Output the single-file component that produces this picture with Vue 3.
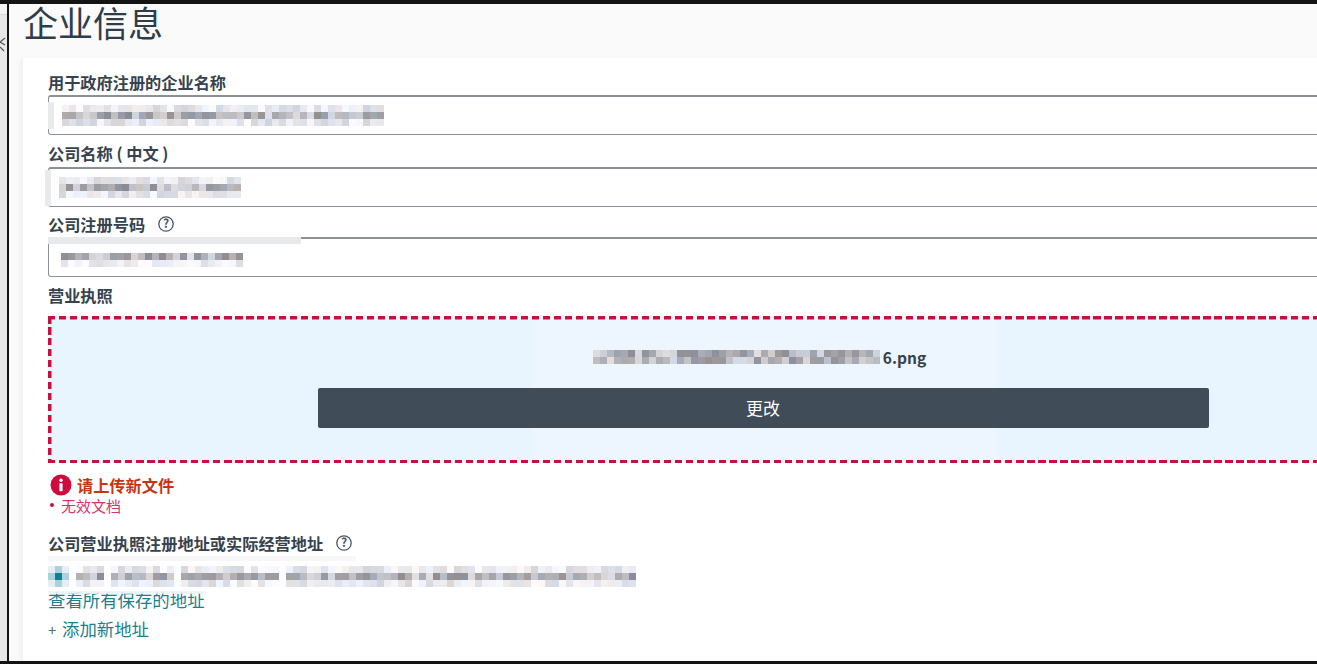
<script setup>
// redacted values in the reference are pixel mosaics, so build them from a small seeded generator
function mosaic(seed, cols, rows, darkRow, gaps = []) {
  let s = seed
  const rnd = () => {
    s = (s * 16807) % 2147483647
    return (s % 1000) / 1000
  }
  const out = []
  for (let r = 0; r < rows; r++) {
    for (let c = 0; c < cols; c++) {
      const strong = r === darkRow || darkRow === -1
      let v = strong ? 140 + rnd() * 85 : 212 + rnd() * 40
      if (gaps.includes(c)) v = 254
      const tint = rnd() * 14 - 7
      out.push(`rgb(${Math.round(v + tint)},${Math.round(v)},${Math.round(v - tint + 6)})`)
    }
  }
  return { cols, cells: out }
}

function gridStyle(m) {
  return { gridTemplateColumns: `repeat(${m.cols}, 7px)` }
}

const legalName = mosaic(17, 46, 3, 1)
const chineseName = mosaic(91, 26, 3, 1)
const regNumber = mosaic(233, 26, 2, 0)
const fileName = mosaic(47, 41, 2, -1)
const address = mosaic(311, 80, 3, 1, [4, 14, 29])
</script>

<template>
  <div class="page">
    <div class="rail">
      <svg class="rail-mark" width="7" height="16" viewBox="0 0 7 16">
        <path d="M6 1 L1 5 L6 8 M1 10 L5 14" fill="none" stroke="#555" stroke-width="1.2" />
      </svg>
    </div>

    <div class="main">
      <h1 class="title">企业信息</h1>

      <div class="card">
        <label class="label">用于政府注册的企业名称</label>
        <div class="input">
          <span class="side-strip"></span>
          <div class="mosaic" :style="gridStyle(legalName)">
            <i v-for="(c, i) in legalName.cells" :key="i" :style="{ background: c }"></i>
          </div>
        </div>

        <label class="label">公司名称 ( 中文 )</label>
        <div class="input second">
          <span class="side-strip wide"></span>
          <div class="mosaic short" :style="gridStyle(chineseName)">
            <i v-for="(c, i) in chineseName.cells" :key="i" :style="{ background: c }"></i>
          </div>
        </div>

        <label class="label">
          公司注册号码
          <svg class="help" width="18" height="18" viewBox="0 0 18 18">
            <circle cx="9" cy="9" r="7.2" fill="none" stroke="#4a5560" stroke-width="1.3" />
            <text x="9" y="13" text-anchor="middle" font-size="12" fill="#4a5560">?</text>
          </svg>
        </label>
        <div class="input">
          <span class="strip"></span>
          <div class="mosaic low" :style="gridStyle(regNumber)">
            <i v-for="(c, i) in regNumber.cells" :key="i" :style="{ background: c }"></i>
          </div>
        </div>

        <label class="label">营业执照</label>
        <div class="dropzone">
          <div class="file">
            <div class="mosaic" :style="gridStyle(fileName)">
              <i v-for="(c, i) in fileName.cells" :key="i" :style="{ background: c }"></i>
            </div>
            <span>6.png</span>
          </div>
          <button class="change">更改</button>
        </div>

        <div class="error-head">
          <svg width="22" height="22" viewBox="0 0 22 22">
            <circle cx="11" cy="11" r="10.5" fill="#cf0a3c" />
            <circle cx="11" cy="6.2" r="1.7" fill="#fff" />
            <rect x="9.4" y="9.2" width="3.2" height="8" rx="0.6" fill="#fff" />
          </svg>
          <span>请上传新文件</span>
        </div>
        <div class="error-item"><i class="dot"></i><span>无效文档</span></div>

        <label class="label address-label">
          公司营业执照注册地址或实际经营地址
          <svg class="help" width="18" height="18" viewBox="0 0 18 18">
            <circle cx="9" cy="9" r="7.2" fill="none" stroke="#4a5560" stroke-width="1.3" />
            <text x="9" y="13" text-anchor="middle" font-size="12" fill="#4a5560">?</text>
          </svg>
        </label>
        <div class="pale-row"></div>
        <div class="address-row">
          <div class="radio">
            <i></i><i class="arm"></i><i></i>
            <i class="arm"></i><i class="centre"></i><i class="arm"></i>
            <i></i><i class="arm"></i><i></i>
          </div>
          <div class="mosaic" :style="gridStyle(address)">
            <i v-for="(c, i) in address.cells" :key="i" :style="{ background: c }"></i>
          </div>
        </div>
        <a class="link saved">查看所有保存的地址</a>
        <a class="link add"><span class="plus">+</span>添加新地址</a>
      </div>
    </div>
  </div>
</template>

<style>
html,
body {
  margin: 0;
  overflow: hidden;
  background: #fafafa;
}
</style>

<style scoped>
.page {
  display: flex;
  box-sizing: border-box;
  width: 1317px;
  height: 664px;
  overflow: hidden;
  border-top: 4px solid #141414;
  border-bottom: 3px solid #141414;
  font-family: "Noto Sans CJK SC", "Liberation Sans", sans-serif;
  color: #36424d;
}

.rail {
  flex: 0 0 7px;
  position: relative;
  background: linear-gradient(#f4f4f4 0, #f4f4f4 10px, #c9c9c9 10px, #e8e8e8 11px);
  border-right: 2px solid #141414;
}

.rail-mark {
  position: absolute;
  left: -1px;
  top: 33px;
}

.main {
  flex: 1;
  min-width: 0;
  background: #fafafa;
  padding-left: 14px;
}

.title {
  margin: 0;
  height: 54px;
  font-size: 35px;
  line-height: 35px;
  font-weight: 400;
  color: #2f3d4a;
}

.card {
  box-sizing: border-box;
  width: 1500px;
  height: 610px;
  padding: 13px 0 0 25px;
  background: #fff;
  box-shadow: -3px 0 4px rgba(0, 0, 0, 0.04);
}

.label {
  box-sizing: border-box;
  display: flex;
  align-items: center;
  height: 24px;
  padding-bottom: 2px;
  font-size: 16.2px;
  font-weight: 600;
  color: #36424d;
}

.help {
  margin-left: 12px;
}

.input {
  position: relative;
  box-sizing: border-box;
  display: flex;
  align-items: center;
  width: 1430px;
  height: 40px;
  margin-bottom: 7px;
  padding-left: 13px;
  border: 1px solid #8b9197;
  border-top-width: 2px;
  border-radius: 3px;
  background: #fff;
}

.input.second {
  margin-top: 1px;
  margin-bottom: 6px;
}

.side-strip {
  position: absolute;
  left: -1px;
  top: 5px;
  width: 6px;
  height: 27px;
  background: #e9eaeb;
}

.side-strip.wide {
  left: -4px;
  top: 1px;
  height: 36px;
}

.strip {
  position: absolute;
  left: -1px;
  top: -2px;
  width: 253px;
  height: 7px;
  background: #e8e9ea;
}

.mosaic {
  display: grid;
  grid-auto-rows: 7px;
  filter: blur(0.7px);
}

.mosaic i {
  display: block;
}

.mosaic.short {
  margin-left: -3px;
}

.mosaic.low {
  margin-top: 4px;
  margin-left: -1px;
}

.dropzone {
  box-sizing: border-box;
  display: flex;
  flex-direction: column;
  align-items: center;
  width: 1430px;
  height: 147px;
  margin-top: 8px;
  padding-top: 33px;
  background:
    repeating-linear-gradient(90deg, #c90f3e 0 7.5px, transparent 7.5px 11px) top left / 100% 3.5px no-repeat,
    repeating-linear-gradient(90deg, #c90f3e 0 7.5px, transparent 7.5px 11px) bottom left / 100% 3.5px no-repeat,
    repeating-linear-gradient(180deg, #c90f3e 0 7.5px, transparent 7.5px 11px) top left / 3.5px 100% no-repeat,
    linear-gradient(90deg, #e9f5fe 484px, #edf5fe 484px, #edf5fe 950px, #e9f5fe 950px);
}

.file {
  display: flex;
  align-items: center;
  height: 16px;
  margin-right: 7px;
  font-size: 15.5px;
  font-weight: 600;
  color: #36424d;
}

.file .mosaic {
  margin-right: 3px;
}

.change {
  width: 891px;
  height: 40px;
  margin-top: 23px;
  padding-bottom: 3px;
  border: 0;
  border-radius: 2px;
  background: #414c59;
  color: #fff;
  font-family: inherit;
  font-size: 17px;
}

.error-head {
  display: flex;
  align-items: center;
  gap: 5px;
  height: 22px;
  margin: 11px 0 0 2px;
  font-size: 16.2px;
  font-weight: 600;
  color: #c9340e;
}

.error-item {
  display: flex;
  align-items: center;
  height: 18px;
  font-size: 15px;
  color: #d8336a;
}

.dot {
  flex: 0 0 4px;
  height: 4px;
  margin: 0 9px 0 0;
  border-radius: 50%;
  background: #cf0a3c;
  transform: translateX(2px);
}

.address-label {
  margin-top: 18px;
}

.pale-row {
  width: 308px;
  height: 5px;
  background: #f7f7f8;
}

.address-row {
  display: flex;
  align-items: center;
  gap: 7px;
  height: 21px;
  margin-top: 5px;
}

.radio {
  display: grid;
  flex: 0 0 21px;
  grid-template-columns: repeat(3, 7px);
  grid-auto-rows: 7px;
  filter: blur(0.6px);
}

.radio i {
  background: #e3eff2;
}

.radio .arm {
  background: #a9d2dc;
}

.radio .centre {
  background: #0f7f99;
}

.link {
  position: relative;
  display: block;
  color: #1d7f8c;
}

.saved {
  width: 158px;
  height: 20px;
  margin-top: 3px;
  font-size: 17.4px;
  line-height: 20px;
}

/* the mosaic above smears over the top of this link in the reference */
.saved::before {
  content: "";
  position: absolute;
  left: 0;
  right: 0;
  top: 1px;
  height: 3px;
  background: rgba(235, 243, 245, 0.8);
}

.add {
  height: 22px;
  margin-top: 8px;
  font-size: 17.4px;
  line-height: 22px;
}

.plus {
  display: inline-block;
  width: 14px;
  font-size: 15px;
  color: #4d7379;
}
</style>
